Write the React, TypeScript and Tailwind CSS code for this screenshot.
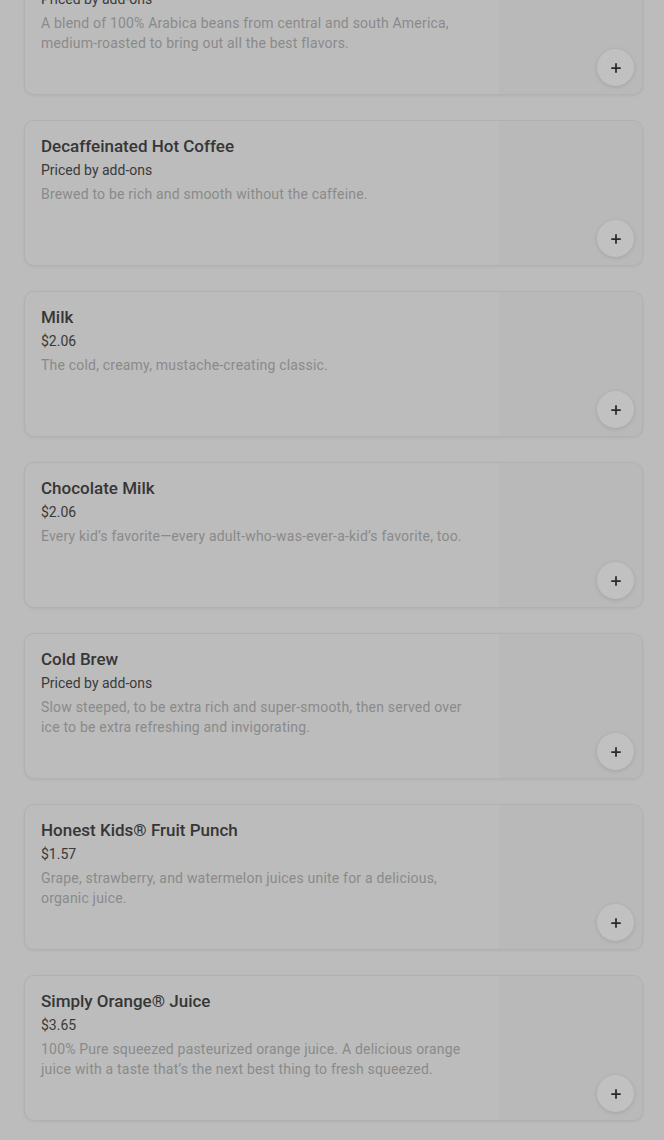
import { Plus } from 'lucide-react';

interface MenuItem {
  name: string;
  price: string;
  description: string;
}

const items: MenuItem[] = [
  {
    name: 'Hot Coffee',
    price: 'Priced by add-ons',
    description: 'A blend of 100% Arabica beans from central and south America, medium-roasted to bring out all the best flavors.',
  },
  {
    name: 'Decaffeinated Hot Coffee',
    price: 'Priced by add-ons',
    description: 'Brewed to be rich and smooth without the caffeine.',
  },
  { name: 'Milk', price: '$2.06', description: 'The cold, creamy, mustache-creating classic.' },
  {
    name: 'Chocolate Milk',
    price: '$2.06',
    description: 'Every kid\u2019s favorite\u2014every adult-who-was-ever-a-kid\u2019s favorite, too.',
  },
  {
    name: 'Cold Brew',
    price: 'Priced by add-ons',
    description: 'Slow steeped, to be extra rich and super-smooth, then served over ice to be extra refreshing and invigorating.',
  },
  {
    name: 'Honest Kids\u00ae Fruit Punch',
    price: '$1.57',
    description: 'Grape, strawberry, and watermelon juices unite for a delicious, organic juice.',
  },
  {
    name: 'Simply Orange\u00ae Juice',
    price: '$3.65',
    description: '100% Pure squeezed pasteurized orange juice. A delicious orange juice with a taste that\u2019s the next best thing to fresh squeezed.',
  },
];

function MenuCard({ item }: { item: MenuItem }) {
  return (
    <div className="flex h-[146px] rounded-[10px] border border-[#b1b1b1] bg-[#bcbcbc] shadow-[0_1px_3px_rgba(0,0,0,0.06)] overflow-hidden">
      <div className="flex-1 pl-4 pr-[22px] pt-[14px]">
        <h3 className="text-[17px] leading-[22px] font-medium text-[#363636]">{item.name}</h3>
        <p className="mt-[3px] text-[14px] leading-[20px] text-[#3a3a3a]">{item.price}</p>
        <p className="mt-[4px] text-[14px] leading-[20px] tracking-[0.2px] text-[#8a8a8a]">{item.description}</p>
      </div>
      <div className="relative w-[143px] bg-[#b9b9b9]">
        <button className="absolute bottom-[8px] right-[8px] h-[37px] w-[37px] rounded-full bg-[#c1c1c1] shadow-[0_1px_4px_rgba(0,0,0,0.12)] flex items-center justify-center">
          <Plus className="h-[14px] w-[14px] text-[#2a2a2a]" strokeWidth={3} />
        </button>
      </div>
    </div>
  );
}

export default function App() {
  return (
    <div
      className="min-h-screen bg-[#bcbcbc] overflow-hidden"
      style={{ fontFamily: 'Roboto, "Noto Sans", sans-serif' }}
    >
      <div className="mt-[-51px] pl-[24px] pr-[21px] flex flex-col gap-[25px]">
        {items.map((item) => (
          <MenuCard key={item.name} item={item} />
        ))}
      </div>
    </div>
  );
}
